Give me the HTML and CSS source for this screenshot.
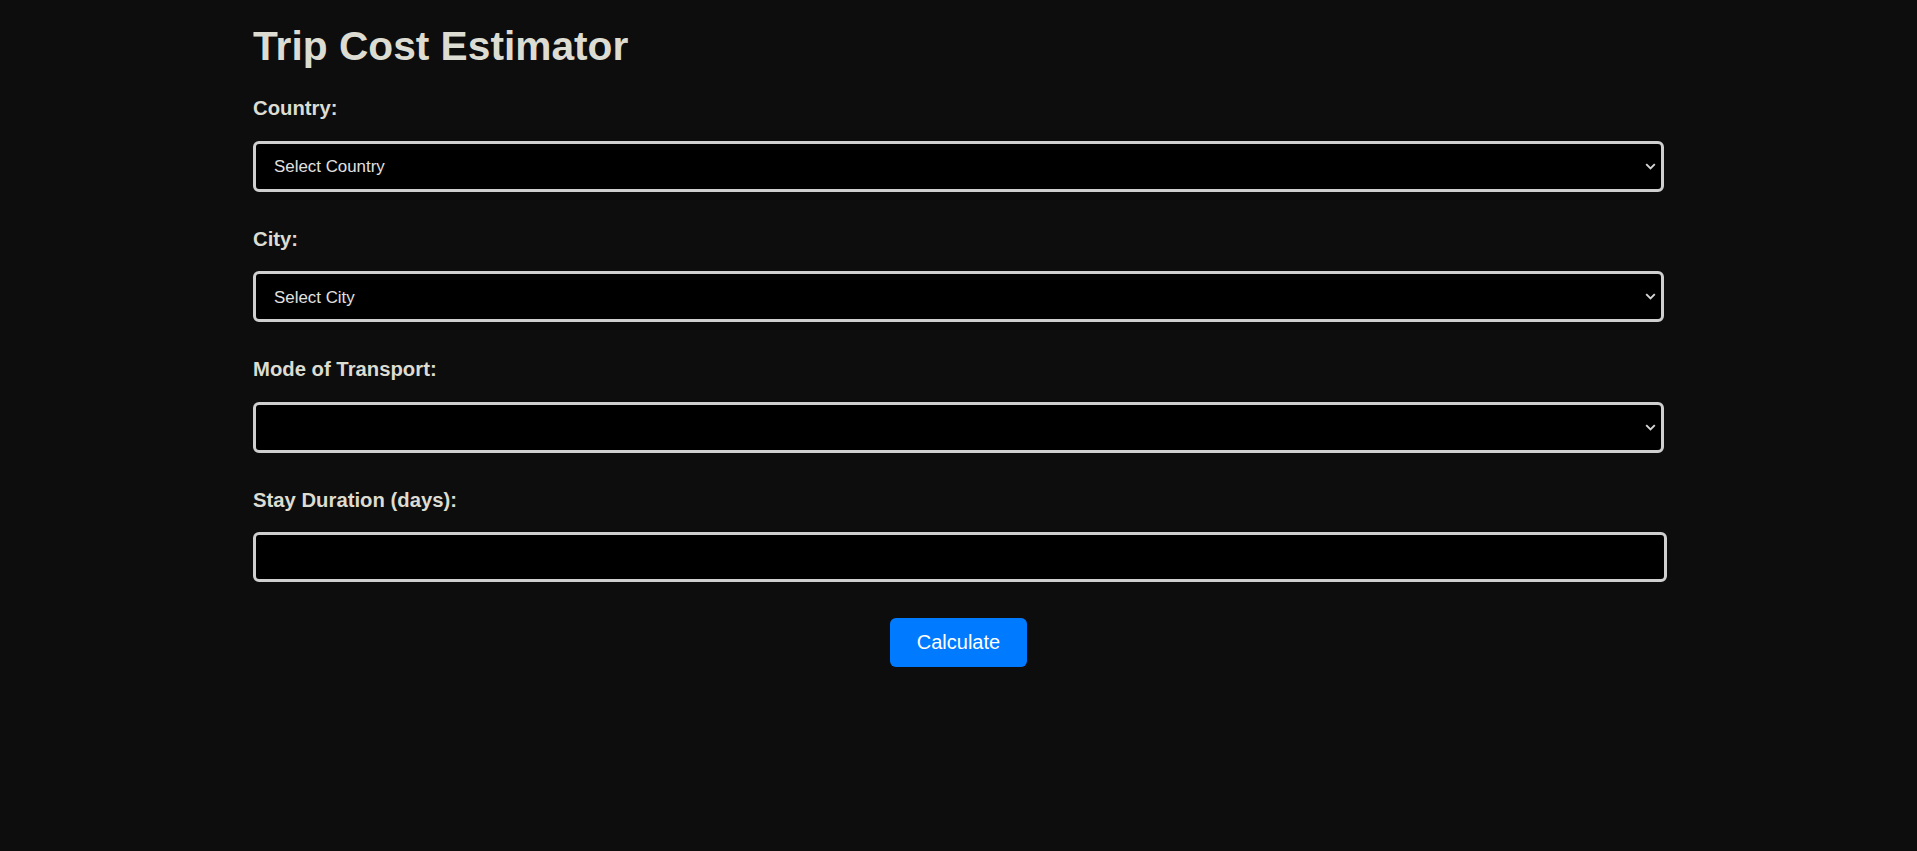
FILE: index.html
```html
<!DOCTYPE html>
<html lang="en">
<head>
<meta charset="utf-8">
<title>Trip Cost Estimator</title>
<link rel="stylesheet" href="styles.css">
</head>
<body>
<main class="container">
  <h1 class="title">Trip Cost Estimator</h1>
  <form class="form">
    <div class="group">
      <label class="label" for="country">Country:</label>
      <div class="select-wrap">
        <select id="country" class="field select">
          <option>Select Country</option>
        </select>
        <svg class="chevron" width="11" height="7" viewBox="0 0 11 7" aria-hidden="true"><path d="M1.2 1.2l4.3 4.3 4.3-4.3" fill="none" stroke="#d6d6d6" stroke-width="1.9"/></svg>
      </div>
    </div>
    <div class="group">
      <label class="label" for="city">City:</label>
      <div class="select-wrap">
        <select id="city" class="field select">
          <option>Select City</option>
        </select>
        <svg class="chevron" width="11" height="7" viewBox="0 0 11 7" aria-hidden="true"><path d="M1.2 1.2l4.3 4.3 4.3-4.3" fill="none" stroke="#d6d6d6" stroke-width="1.9"/></svg>
      </div>
    </div>
    <div class="group">
      <label class="label" for="transport">Mode of Transport:</label>
      <div class="select-wrap">
        <select id="transport" class="field select">
          <option></option>
        </select>
        <svg class="chevron" width="11" height="7" viewBox="0 0 11 7" aria-hidden="true"><path d="M1.2 1.2l4.3 4.3 4.3-4.3" fill="none" stroke="#d6d6d6" stroke-width="1.9"/></svg>
      </div>
    </div>
    <div class="group">
      <label class="label" for="days">Stay Duration (days):</label>
      <input id="days" class="field input" type="number">
    </div>
    <div class="actions">
      <button type="button" class="btn">Calculate</button>
    </div>
  </form>
</main>
</body>
</html>
```
FILE: styles.css
```css
html, body {
  margin: 0;
  padding: 0;
  background: #0d0d0d;
}

body {
  font-family: "Liberation Sans", Arial, sans-serif;
  color: #dcdcd2;
  min-height: 851px;
}

.container {
  width: 1411px;
  margin: 0 auto;
  padding-top: 22.5px;
}

.title {
  margin: 0 0 28.5px;
  font-size: 40.7px;
  line-height: 46px;
  font-weight: bold;
  color: #dcdcd2;
}

.form {
  display: flex;
  flex-direction: column;
}

.group {
  display: flex;
  flex-direction: column;
  align-items: flex-start;
  margin-bottom: 36px;
}

.label {
  font-size: 20.3px;
  line-height: 23px;
  font-weight: bold;
  color: #dcdcd2;
  margin-bottom: 20.5px;
}

.select-wrap {
  position: relative;
  width: 1411px;
}

.field {
  box-sizing: border-box;
  height: 51px;
  background: #000;
  border: 3px solid #cfcfcf;
  border-radius: 6px;
  color: #e0e0e0;
  font-family: "Liberation Sans", Arial, sans-serif;
  font-size: 16.9px;
  outline: none;
  margin: 0;
}

.select {
  width: 1411px;
  padding: 1px 30px 0 18px;
  appearance: none;
  -webkit-appearance: none;
}

.chevron {
  position: absolute;
  right: 8.5px;
  top: 22px;
  pointer-events: none;
}

.input {
  width: 1414px;
  height: 50px;
  padding: 0 18px;
  -moz-appearance: textfield;
}

.input::-webkit-outer-spin-button,
.input::-webkit-inner-spin-button {
  -webkit-appearance: none;
  margin: 0;
}

.actions {
  display: flex;
  justify-content: center;
}

.btn {
  background: #007bff;
  color: #fff;
  border: none;
  border-radius: 6px;
  font-family: "Liberation Sans", Arial, sans-serif;
  font-size: 20px;
  line-height: 23px;
  padding: 13px 26.5px;
  cursor: pointer;
}
```
